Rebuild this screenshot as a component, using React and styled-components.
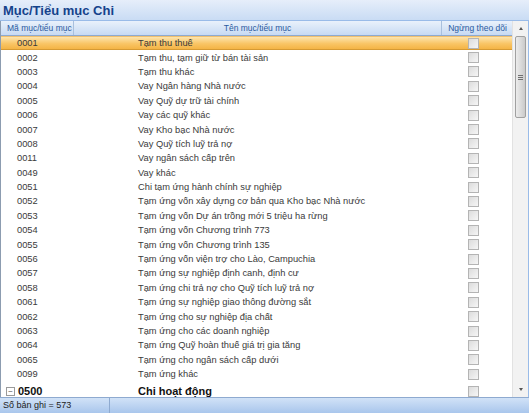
import styled, { createGlobalStyle } from "styled-components";

const GlobalStyle = createGlobalStyle`
  html, body { margin: 0; padding: 0; background: #fff; }
  body { font-family: "Liberation Sans", Arial, sans-serif; }
`;

const rows = [
  ["0001", "Tạm thu thuế"],
  ["0002", "Tạm thu, tạm giữ từ bán tài sản"],
  ["0003", "Tạm thu khác"],
  ["0004", "Vay Ngân hàng Nhà nước"],
  ["0005", "Vay Quỹ dự trữ tài chính"],
  ["0006", "Vay các quỹ khác"],
  ["0007", "Vay Kho bạc Nhà nước"],
  ["0008", "Vay Quỹ tích luỹ trả nợ"],
  ["0011", "Vay ngân sách cấp trên"],
  ["0049", "Vay khác"],
  ["0051", "Chi tạm ứng hành chính sự nghiệp"],
  ["0052", "Tạm ứng vốn xây dựng cơ bản qua Kho bạc Nhà nước"],
  ["0053", "Tạm ứng vốn Dự án trồng mới 5 triệu ha rừng"],
  ["0054", "Tạm ứng vốn Chương trình 773"],
  ["0055", "Tạm ứng vốn Chương trình 135"],
  ["0056", "Tạm ứng vốn viện trợ cho Lào, Campuchia"],
  ["0057", "Tạm ứng sự nghiệp định canh, định cư"],
  ["0058", "Tạm ứng chi trả nợ cho Quỹ tích luỹ trả nợ"],
  ["0061", "Tạm ứng sự nghiệp giao thông đường sắt"],
  ["0062", "Tạm ứng cho sự nghiệp địa chất"],
  ["0063", "Tạm ứng cho các doanh nghiệp"],
  ["0064", "Tạm ứng Quỹ hoàn thuế giá trị gia tăng"],
  ["0065", "Tạm ứng cho ngân sách cấp dưới"],
  ["0099", "Tạm ứng khác"],
];

const App = () => {
  return (
    <Window>
      <GlobalStyle />
      <TitleBar>Mục/Tiểu mục Chi</TitleBar>
      <Grid>
        <TableArea>
          <HeaderRow>
            <HeaderCell $w={73} $align="left">Mã mục/tiểu mục</HeaderCell>
            <HeaderCell $w={368}>Tên mục/tiểu mục</HeaderCell>
            <HeaderCell $w={72} $last>Ngừng theo dõi</HeaderCell>
          </HeaderRow>
          <Body>
            {rows.map(([code, name], i) => (
              <Row key={code} $selected={i === 0}>
                <CodeCell>{code}</CodeCell>
                <NameCell>{name}</NameCell>
                <CheckCell>
                  <CheckBox />
                </CheckCell>
              </Row>
            ))}
            <Row $group>
              <CodeCell $group>
                <Expander>−</Expander>
                0500
              </CodeCell>
              <NameCell $group>Chi hoạt động</NameCell>
              <CheckCell>
                <CheckBox />
              </CheckCell>
            </Row>
          </Body>
        </TableArea>
        <ScrollBar>
          <ScrollButton>
            <Arrow $up />
          </ScrollButton>
          <Track>
            <Thumb>
              <Grip />
            </Thumb>
          </Track>
          <ScrollButton>
            <Arrow />
          </ScrollButton>
        </ScrollBar>
      </Grid>
      <StatusBar>
        <StatusPanel>Số bản ghi = 573</StatusPanel>
      </StatusBar>
    </Window>
  );
};

export default App;

const Window = styled.div`
  width: 529px;
  height: 413px;
  display: flex;
  flex-direction: column;
  overflow: hidden;
  background: #fff;
`;

const TitleBar = styled.div`
  height: 21px;
  flex: none;
  box-sizing: border-box;
  padding: 3px 0 0 3px;
  background: linear-gradient(#e6eefa, #c9dcf4);
  color: #15428b;
  font-family: "Liberation Sans", Arial, sans-serif;
  font-weight: bold;
  font-size: 13px;
  line-height: 15px;
  border-bottom: 1px solid #99bbe8;
`;

const Grid = styled.div`
  flex: 1;
  min-height: 0;
  display: flex;
  border-left: 1px solid #8c9cb0;
  border-right: 1px solid #99bbe8;
`;

const TableArea = styled.div`
  width: 512px;
  display: flex;
  flex-direction: column;
  overflow: hidden;
`;

const HeaderRow = styled.div`
  height: 14px;
  flex: none;
  display: flex;
  background: linear-gradient(#e9f1fb, #c7daf3);
  border-bottom: 1px solid #8eaad0;
`;

const HeaderCell = styled.div`
  width: ${(p) => p.$w}px;
  flex: none;
  box-sizing: border-box;
  border-right: ${(p) => (p.$last ? "1px solid #8eaad0" : "1px solid #a9c0dd")};
  color: #2a5aa0;
  font-family: "Liberation Sans", Arial, sans-serif;
  font-size: 8.5px;
  line-height: 14px;
  text-align: ${(p) => p.$align || "center"};
  padding-left: ${(p) => (p.$align === "left" ? "6px" : "0")};
  white-space: nowrap;
  overflow: hidden;
`;

const Body = styled.div`
  flex: 1;
  overflow: hidden;
`;

const Row = styled.div`
  height: ${(p) => (p.$group ? "20px" : "14.4px")};
  display: flex;
  align-items: center;
  box-sizing: border-box;
  background: ${(p) =>
    p.$selected ? "linear-gradient(#fde5ae, #f9c566 55%, #f4b445)" : "transparent"};
  border-bottom: 1px solid ${(p) => (p.$selected ? "#d69a33" : "transparent")};
  border-top: 1px solid ${(p) => (p.$selected ? "#f0c070" : "transparent")};
`;

const CodeCell = styled.div`
  width: 73px;
  flex: none;
  box-sizing: border-box;
  padding-left: ${(p) => (p.$group ? "5px" : "16px")};
  display: flex;
  align-items: center;
  font-family: "Liberation Sans", Arial, sans-serif;
  font-size: ${(p) => (p.$group ? "11px" : "9.3px")};
  font-weight: ${(p) => (p.$group ? "bold" : "normal")};
  color: ${(p) => (p.$group ? "#111" : "#3a3a3a")};
`;

const Expander = styled.span`
  width: 7px;
  height: 7px;
  border: 1px solid #9a9a9a;
  font-size: 8px;
  line-height: 7px;
  text-align: center;
  color: #555;
  font-weight: normal;
  margin-right: 3px;
`;

const NameCell = styled.div`
  width: 368px;
  flex: none;
  box-sizing: border-box;
  padding-left: 64px;
  font-family: "Liberation Sans", Arial, sans-serif;
  font-size: ${(p) => (p.$group ? "11px" : "9.3px")};
  font-weight: ${(p) => (p.$group ? "bold" : "normal")};
  color: ${(p) => (p.$group ? "#111" : "#3a3a3a")};
  white-space: nowrap;
`;

const CheckCell = styled.div`
  width: 72px;
  flex: none;
  box-sizing: border-box;
  display: flex;
  justify-content: center;
  padding-right: 10px;
`;

const CheckBox = styled.div`
  width: 9px;
  height: 9px;
  border: 1px solid #b4b4b4;
  background: linear-gradient(135deg, #dcdcdc, #f6f6f6);
`;

const ScrollBar = styled.div`
  width: 15px;
  flex: none;
  display: flex;
  flex-direction: column;
  background: #f2f2f2;
  border-left: 1px solid #e2e2e2;
`;

const ScrollButton = styled.div`
  height: 15px;
  flex: none;
  display: flex;
  align-items: center;
  justify-content: center;
`;

const Arrow = styled.div`
  width: 0;
  height: 0;
  border-left: 2.5px solid transparent;
  border-right: 2.5px solid transparent;
  ${(p) =>
    p.$up ? "border-bottom: 3px solid #555;" : "border-top: 3px solid #555;"}
`;

const Track = styled.div`
  flex: 1;
  padding: 0 2px;
`;

const Thumb = styled.div`
  height: 82px;
  box-sizing: border-box;
  border: 1px solid #a0a0a0;
  border-radius: 2px;
  background: linear-gradient(90deg, #ececec, #d8d8d8 60%, #cacaca);
  display: flex;
  align-items: center;
  justify-content: center;
`;

const Grip = styled.div`
  width: 5px;
  height: 5px;
  background: repeating-linear-gradient(#6f6f6f 0 1px, transparent 1px 2px);
`;

const StatusBar = styled.div`
  height: 16px;
  flex: none;
  box-sizing: border-box;
  display: flex;
  background: linear-gradient(#d1e2f7, #a9c6ec);
  border-top: 1px solid #8eaad0;
`;

const StatusPanel = styled.div`
  width: 110px;
  box-sizing: border-box;
  border-right: 1px solid #8eaad0;
  padding-left: 3px;
  font-family: "Liberation Sans", Arial, sans-serif;
  font-size: 9px;
  line-height: 15px;
  color: #222;
`;
